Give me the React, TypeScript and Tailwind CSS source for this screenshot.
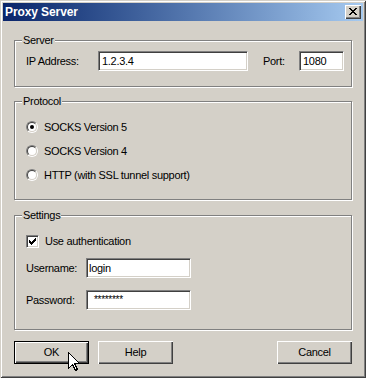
import React from "react";

const font = { fontFamily: '"Liberation Sans", Arial, sans-serif' };

function Group({ label, className, children }: { label: string; className: string; children: React.ReactNode }) {
  return (
    <div className={`relative border border-[#808080] shadow-[inset_1px_1px_0_#fff,1px_1px_0_#fff] ${className}`}>
      <div className="absolute left-[7px] top-[-7px] h-[13px] bg-[#d4d0c8] px-[1px] leading-[13px]">{label}</div>
      {children}
    </div>
  );
}

function Field({ value, className }: { value: string; className: string }) {
  return (
    <div
      className={`h-[20px] bg-white border border-t-[#808080] border-l-[#808080] border-b-white border-r-white shadow-[inset_1px_1px_0_#404040,inset_-1px_-1px_0_#d4d0c8] flex items-center leading-none ${className}`}
    >
      {value}
    </div>
  );
}

function Radio({ checked, label }: { checked?: boolean; label: string }) {
  return (
    <div className="flex h-[24px] items-center">
      <div className="w-[12px] h-[12px] rounded-full border border-t-[#808080] border-l-[#808080] border-b-white border-r-white">
        <div className="w-full h-full rounded-full border border-t-[#404040] border-l-[#404040] border-b-[#d4d0c8] border-r-[#d4d0c8] bg-white flex items-center justify-center">
          {checked && <div className="w-[4px] h-[4px] rounded-full bg-black" />}
        </div>
      </div>
      <span className="ml-[6px]">{label}</span>
    </div>
  );
}

function Button({ label, def, className }: { label: string; def?: boolean; className?: string }) {
  return (
    <div
      className={`w-[75px] h-[23px] flex items-center justify-center ${
        def ? "border border-black" : ""
      } shadow-[inset_1px_1px_0_#fff,inset_-1px_-1px_0_#404040,inset_-2px_-2px_0_#808080] ${className ?? ""}`}
    >
      {label}
    </div>
  );
}

export default function App() {
  return (
    <div
      style={font}
      className="relative w-[366px] h-[378px] bg-[#d4d0c8] p-[3px] flex flex-col text-[11px] tracking-[-0.3px] text-black shadow-[inset_1px_1px_0_#d4d0c8,inset_-1px_-1px_0_#404040,inset_2px_2px_0_#fff,inset_-2px_-2px_0_#808080]"
    >
      {/* Title bar */}
      <div className="h-[18px] flex items-center bg-gradient-to-r from-[#0a246a] to-[#a6caf0] pl-[2px] pr-[2px]">
        <span className="text-white font-bold text-[12px] tracking-[-0.1px]">Proxy Server</span>
        <div className="ml-auto w-[16px] h-[14px] bg-[#d4d0c8] flex items-center justify-center shadow-[inset_1px_1px_0_#fff,inset_-1px_-1px_0_#404040,inset_-2px_-2px_0_#808080]">
          <svg width="8" height="7" viewBox="0 0 8 7" shapeRendering="crispEdges" className="mb-[1px]">
            <path
              d="M0 0h2v1h-2zM6 0h2v1h-2zM1 1h2v1h-2zM5 1h2v1h-2zM2 2h4v1h-4zM3 3h2v1h-2zM2 4h4v1h-4zM1 5h2v1h-2zM5 5h2v1h-2zM0 6h2v1h-2zM6 6h2v1h-2z"
              fill="#000"
            />
          </svg>
        </div>
      </div>

      <div className="px-[11px] pt-[19px] flex flex-col">
        <Group label="Server" className="h-[47px] pl-[11px] pt-[10px]">
          <div className="flex items-center">
            <span className="w-[72px]">IP Address:</span>
            <Field value="1.2.3.4" className="w-[150px] pl-[3px]" />
            <span className="ml-[15px] w-[36px]">Port:</span>
            <Field value="1080" className="w-[45px] pl-[3px]" />
          </div>
        </Group>

        <Group label="Protocol" className="mt-[14px] h-[99px] pl-[11px] pt-[13px]">
          <Radio checked label="SOCKS Version 5" />
          <Radio label="SOCKS Version 4" />
          <Radio label="HTTP (with SSL tunnel support)" />
        </Group>

        <Group label="Settings" className="mt-[15px] h-[115px] pl-[11px] pt-[19px]">
          <div className="flex items-center h-[13px]">
            <div className="w-[13px] h-[13px] bg-white border border-t-[#808080] border-l-[#808080] border-b-white border-r-white shadow-[inset_1px_1px_0_#404040,inset_-1px_-1px_0_#d4d0c8] flex items-center justify-center">
              <svg width="7" height="7" viewBox="0 0 7 7" shapeRendering="crispEdges">
                <path d="M0 2h1v3h-1zM1 3h1v3h-1zM2 4h1v3h-1zM3 3h1v3h-1zM4 2h1v3h-1zM5 1h1v3h-1zM6 0h1v3h-1z" fill="#000" />
              </svg>
            </div>
            <span className="ml-[6px]">Use authentication</span>
          </div>
          <div className="flex items-center mt-[10px]">
            <span className="w-[60px]">Username:</span>
            <Field value="login" className="w-[105px] pl-[2px]" />
          </div>
          <div className="flex items-center mt-[12px]">
            <span className="w-[60px]">Password:</span>
            <Field value="********" className="w-[105px] pl-[7px] text-[10px]" />
          </div>
        </Group>

        <div className="mt-[11px] flex items-center">
          <Button label="OK" def />
          <Button label="Help" className="ml-[9px]" />
          <Button label="Cancel" className="ml-auto" />
        </div>
      </div>

      {/* Mouse cursor */}
      <svg className="absolute left-[68px] top-[352px]" width="12" height="20" viewBox="0 0 12 20" shapeRendering="crispEdges">
        <polygon points="0.5,0.5 0.5,16.5 4.5,12.5 7.5,18.5 9.5,17.5 6.5,11.5 11.5,11.5" fill="#fff" stroke="#000" strokeWidth="1" />
      </svg>
    </div>
  );
}
